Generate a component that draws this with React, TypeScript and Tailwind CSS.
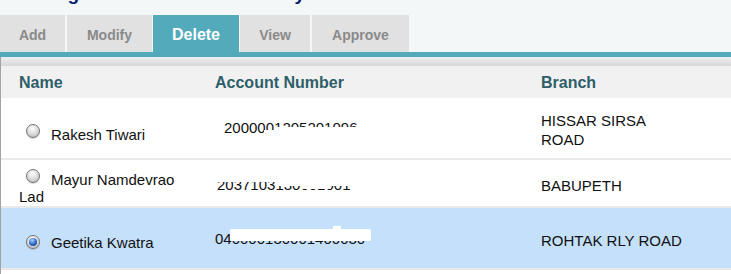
import React from "react";

interface Beneficiary {
  name: string;
  account: string;
  branch: string;
  height: string;
  selected?: boolean;
}

const rows: Beneficiary[] = [
  { name: "Rakesh Tiwari", account: "2000001205201096", branch: "HISSAR SIRSA ROAD", height: "h-[60px]" },
  { name: "Mayur Namdevrao Lad", account: "2037103130001001", branch: "BABUPETH", height: "h-[46px]" },
  { name: "Geetika Kwatra", account: "040000130001400030", branch: "ROHTAK RLY ROAD", height: "h-[60px]", selected: true },
];

const tabs = [
  { label: "Add", cls: "w-[65px]" },
  { label: "Modify", cls: "w-[85px] ml-[2px]" },
  { label: "Delete", cls: "w-[86px] ml-[1px]", active: true },
  { label: "View", cls: "w-[70px] ml-[1px]" },
  { label: "Approve", cls: "w-[97px] ml-[2px]" },
];

function Radio({ checked }: { checked?: boolean }) {
  return (
    <span className="inline-flex items-center justify-center w-[14px] h-[14px] rounded-full border border-[#737373] bg-[radial-gradient(circle_at_45%_30%,#ffffff,#dcdcdc_50%,#adadad)] shadow-[0_1px_1px_rgba(0,0,0,0.15)] align-[2px] ml-[7px] mr-[11px]">
      {checked && (
        <span className="block w-[8px] h-[8px] rounded-full bg-[radial-gradient(circle_at_40%_30%,#a6d4ff,#2a66c7_55%,#0b2c6e)]" />
      )}
    </span>
  );
}

// account numbers are partly masked in the original screenshot
function Account({ value, idx }: { value: string; idx: number }) {
  return (
    <span className="relative inline-block leading-[17px]">
      {value}
      {idx === 0 && (
        <>
          <span className="absolute left-[52px] right-[-4px] top-[8px] h-[10px] bg-white" />
          <span className="absolute left-[40px] w-[14px] top-[11px] h-[7px] bg-white" />
        </>
      )}
      {idx === 1 && (
        <>
          <span className="absolute left-[-2px] w-[62px] top-0 h-[6px] bg-white" />
          <span className="absolute left-[58px] right-[-4px] top-0 h-[10px] bg-white" />
          <span className="absolute left-[84px] w-[30px] top-[8px] h-[5px] bg-white" />
        </>
      )}
      {idx === 2 && (
        <>
          <span className="absolute left-[15px] right-[-6px] top-[-1px] h-[12px] bg-white rounded-[2px]" />
          <span className="absolute left-[118px] w-[8px] top-[-4px] h-[6px] bg-white" />
        </>
      )}
    </span>
  );
}

export default function App() {
  return (
    <div className="w-[731px] h-[274px] overflow-hidden bg-[#f3f7f8] font-['Liberation_Sans',Arial,sans-serif]">
      <div className="h-[15px] overflow-hidden">
        <div className="mt-[-18px] pl-[19px] text-[19px] leading-[23px] font-bold text-[#0b1c6e] whitespace-nowrap">
          Manage Other Bank Beneficiary
        </div>
      </div>

      <div className="flex h-[37px]">
        {tabs.map((t) => (
          <div
            key={t.label}
            className={`${t.cls} flex items-center justify-center pt-[3px] font-bold ${
              t.active ? "bg-[#53aabb] text-white text-[16px]" : "bg-[#e1e1e1] text-[#8a8a8a] text-[14px]"
            }`}
          >
            {t.label}
          </div>
        ))}
      </div>
      <div className="h-[5px] bg-[#53aabb]" />

      <div className="border-l border-[#a3a3a3] bg-white h-full">
        <div className="h-[9px] bg-gradient-to-b from-[#efefef] to-[#d8d8d8]" />
        <div className="flex h-[32px] items-center bg-[#f1f1f1] text-[16px] font-bold text-[#2e5f69] pt-[1px]">
          <div className="w-[214px] pl-[18px]">Name</div>
          <div className="w-[326px]">Account Number</div>
          <div className="flex-1">Branch</div>
        </div>

        {rows.map((r, i) => (
          <div key={r.name}>
            <div
              className={`flex items-center ${r.height} text-[15px] text-[#111] ${
                r.selected ? "bg-[#c5e0fa]" : "bg-white"
              }`}
            >
              <div className={`w-[214px] pl-[18px] pr-[26px] leading-[17px] ${i === 0 ? "pt-[11px]" : "pt-[8px]"}`}>
                <Radio checked={r.selected} />
                {r.name}
              </div>
              <div className={`w-[326px] ${i === 0 ? "pl-[9px]" : i === 1 ? "pl-[2px] pt-[4px]" : "pt-[2px]"}`}>
                <Account value={r.account} idx={i} />
              </div>
              <div className="w-[146px] pt-[4px] leading-[19px]">{r.branch}</div>
            </div>
            <div className="h-[2px] bg-[#e9e9e9]" />
          </div>
        ))}
      </div>
    </div>
  );
}
